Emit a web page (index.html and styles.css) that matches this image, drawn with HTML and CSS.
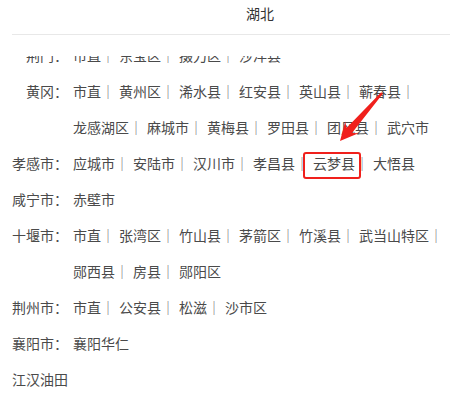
FILE: index.html
```html
<!DOCTYPE html>
<html lang="zh-CN">
<head>
    <meta charset="UTF-8">
    <meta name="viewport" content="width=device-width, initial-scale=1.0">
    <title>湖北</title>
    <link rel="stylesheet" href="styles.css">
</head>
<body>
    <div class="page">
        <div class="header">湖北</div>

        <div class="list">
            <div class="rows">
                <div class="row">
                    <span class="label">荆门：</span>
                    <div class="values">
                        <span class="item">市直<i class="sep">｜</i></span><span class="item">东宝区<i class="sep">｜</i></span><span class="item">掇刀区<i class="sep">｜</i></span><span class="item">沙洋县</span>
                    </div>
                </div>
                <div class="row">
                    <span class="label">黄冈：</span>
                    <div class="values">
                        <span class="item">市直<i class="sep">｜</i></span><span class="item">黄州区<i class="sep">｜</i></span><span class="item">浠水县<i class="sep">｜</i></span><span class="item">红安县<i class="sep">｜</i></span><span class="item">英山县<i class="sep">｜</i></span><span class="item">蕲春县<i class="sep">｜</i></span><span class="item">龙感湖区<i class="sep">｜</i></span><span class="item">麻城市<i class="sep">｜</i></span><span class="item">黄梅县<i class="sep">｜</i></span><span class="item">罗田县<i class="sep">｜</i></span><span class="item">团风县<i class="sep">｜</i></span><span class="item">武穴市</span>
                    </div>
                </div>
                <div class="row">
                    <span class="label">孝感市：</span>
                    <div class="values">
                        <span class="item">应城市<i class="sep">｜</i></span><span class="item">安陆市<i class="sep">｜</i></span><span class="item">汉川市<i class="sep">｜</i></span><span class="item">孝昌县<i class="sep">｜</i></span><span class="item marked">云梦县<i class="sep">｜</i></span><span class="item">大悟县</span>
                    </div>
                </div>
                <div class="row">
                    <span class="label">咸宁市：</span>
                    <div class="values">
                        <span class="item">赤壁市</span>
                    </div>
                </div>
                <div class="row">
                    <span class="label">十堰市：</span>
                    <div class="values">
                        <span class="item">市直<i class="sep">｜</i></span><span class="item">张湾区<i class="sep">｜</i></span><span class="item">竹山县<i class="sep">｜</i></span><span class="item">茅箭区<i class="sep">｜</i></span><span class="item">竹溪县<i class="sep">｜</i></span><span class="item">武当山特区<i class="sep">｜</i></span><span class="item">郧西县<i class="sep">｜</i></span><span class="item">房县<i class="sep">｜</i></span><span class="item">郧阳区</span>
                    </div>
                </div>
                <div class="row">
                    <span class="label">荆州市：</span>
                    <div class="values">
                        <span class="item">市直<i class="sep">｜</i></span><span class="item">公安县<i class="sep">｜</i></span><span class="item">松滋<i class="sep">｜</i></span><span class="item">沙市区</span>
                    </div>
                </div>
                <div class="row">
                    <span class="label">襄阳市：</span>
                    <div class="values">
                        <span class="item">襄阳华仁</span>
                    </div>
                </div>
                <div class="row">
                    <span class="single">江汉油田</span>
                </div>
            </div>
        </div>

        <!-- 标注箭头 -->
        <svg class="arrow" width="450" height="401" viewBox="0 0 450 401">
            <polygon points="340,141 358.5,133.2 352,133 382.8,93.7 381.2,92.3 346.5,128 345.3,121.6" fill="#f0201c"/>
        </svg>
    </div>
</body>
</html>
```

FILE: styles.css
```css
body {
    margin: 0;
    background-color: #fff;
    font-family: "Noto Sans CJK SC", "Noto Sans", sans-serif;
    font-size: 14px;
    color: #4a4a4a;
}
.page {
    position: relative;
    width: 450px;
    height: 401px;
    overflow: hidden;
}
.header {
    margin-left: 12px;
    padding-left: 58px;
    height: 34px;
    line-height: 26px;
    text-align: center;
    color: #333;
    border-bottom: 1px solid #e8e8e8;
}
.list {
    margin-top: 21px;
    height: 345px;
    overflow: hidden;
}
.rows {
    margin-top: -19px;
}
.row {
    display: flex;
    padding-left: 12px;
    line-height: 36px;
}
.label {
    flex: none;
    width: 56px;
    text-align: right;
}
.values {
    flex: 1;
    margin-left: 5px;
}
.item {
    display: inline-block;
    position: relative;
    white-space: nowrap;
}
.sep {
    font-style: normal;
    color: #777;
    margin-right: 4px;
}
.marked::after {
    content: "";
    position: absolute;
    left: -10px;
    top: 7px;
    width: 54px;
    height: 23px;
    border: 2px solid #f0201c;
    border-radius: 3px;
}
.arrow {
    position: absolute;
    left: 0;
    top: 0;
    pointer-events: none;
}
```
